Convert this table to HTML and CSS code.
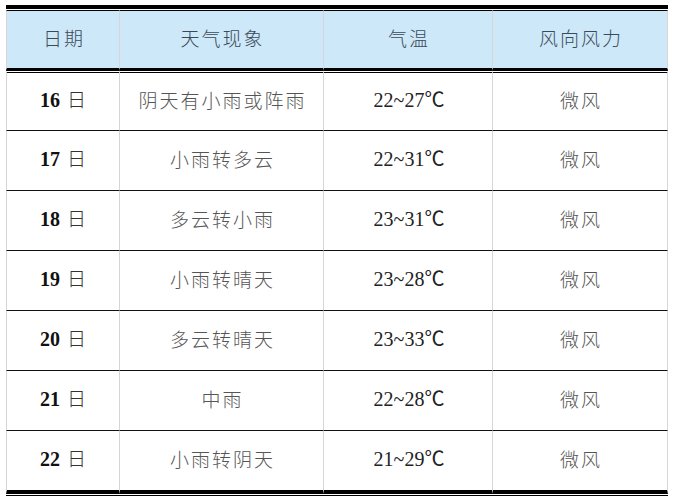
FILE: index.html
```html
<!DOCTYPE html>
<html lang="zh">
<head>
<meta charset="utf-8">
<link rel="stylesheet" href="styles.css">
</head>
<body>
<div class="frame">
<table class="wx">
<thead>
<tr><th class="c1">日期</th><th class="c2">天气现象</th><th class="c3">气温</th><th class="c4">风向风力</th></tr>
</thead>
<tbody>
<tr><td><b>16</b> 日</td><td>阴天有小雨或阵雨</td><td class="t">22~27℃</td><td>微风</td></tr>
<tr><td><b>17</b> 日</td><td>小雨转多云</td><td class="t">22~31℃</td><td>微风</td></tr>
<tr><td><b>18</b> 日</td><td>多云转小雨</td><td class="t">23~31℃</td><td>微风</td></tr>
<tr><td><b>19</b> 日</td><td>小雨转晴天</td><td class="t">23~28℃</td><td>微风</td></tr>
<tr><td><b>20</b> 日</td><td>多云转晴天</td><td class="t">23~33℃</td><td>微风</td></tr>
<tr><td><b>21</b> 日</td><td>中雨</td><td class="t">22~28℃</td><td>微风</td></tr>
<tr><td><b>22</b> 日</td><td>小雨转阴天</td><td class="t">21~29℃</td><td>微风</td></tr>
</tbody>
</table>
</div>
</body>
</html>
```
FILE: styles.css
```css
html, body {
  margin: 0;
  padding: 0;
  background: #fff;
}
.frame {
  margin: 5px 0 0 6px;
  width: 662px;
  border-top: 4px solid #000;
  border-bottom: 1px solid #000;
  padding: 1px 0;
}
.wx {
  width: 662px;
  border-collapse: separate;
  border-spacing: 0;
  table-layout: fixed;
  font-family: "Noto Sans CJK SC", sans-serif;
  font-weight: 300;
  font-size: 19px;
  line-height: 1;
  letter-spacing: 2px;
  color: #555;
}
.wx th, .wx td {
  border-left: 1px solid #d6d6d6;
  text-align: center;
  vertical-align: middle;
  padding: 0 0 5px 2px;
}
.wx th:last-child, .wx td:last-child {
  border-right: 1px solid #d6d6d6;
}
.wx th {
  background: #cde8f9;
  border-top: 1px solid #000;
  border-bottom: 2px solid #000;
  height: 52px;
  font-weight: 300;
  color: #3c4a58;
}
.c1 { width: 110px; }
.c2 { width: 201px; }
.c3 { width: 166px; }
.wx td {
  height: 54px;
  border-bottom: 1px solid #111;
}
.wx tbody tr:first-child td {
  border-top: 3px double #000;
  height: 52px;
}
.wx tbody tr:last-child td {
  border-bottom: 4px solid #000;
}
.wx td b {
  font-family: "Liberation Serif", serif;
  font-weight: 700;
  color: #111;
  font-size: 20px;
  letter-spacing: 0;
}
.wx td:first-child {
  color: #333;
  word-spacing: 1px;
}
.wx td.t {
  font-family: "Liberation Serif", "Noto Sans CJK SC", serif;
  font-weight: 400;
  color: #222;
  font-size: 20px;
  letter-spacing: 0;
  padding-bottom: 3px;
}
```
